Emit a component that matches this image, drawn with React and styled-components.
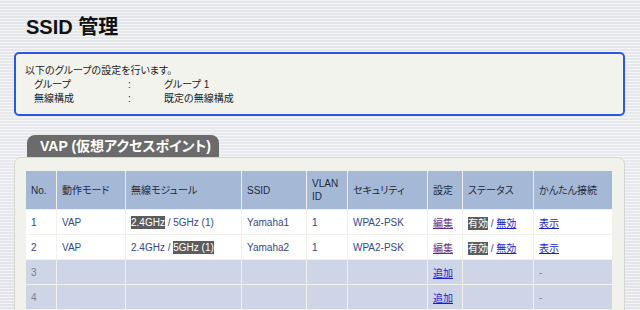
import React from "react";
import styled, { createGlobalStyle } from "styled-components";

const Global = createGlobalStyle`
  html, body { margin: 0; padding: 0; }
  body {
    width: 640px;
    height: 310px;
    overflow: hidden;
    font-family: "Liberation Sans", "Noto Sans CJK JP", sans-serif;
    font-feature-settings: "palt";
    background:
      repeating-linear-gradient(to bottom, rgba(255,255,255,0.6) 0 1px, rgba(255,255,255,0) 1px 3px),
      linear-gradient(to bottom, #e3e5e9, #e8e9ec 50%, #e1e3e7);
    color: #222;
  }
`;

const Page = styled.div`
  padding: 14px 15px 0 14px;
`;

const Title = styled.h1`
  margin: 0 0 0 12px;
  font-size: 20px;
  line-height: 26px;
  font-weight: bold;
  color: #111;
`;

const InfoBox = styled.div`
  margin-top: 12px;
  border: 2px solid #2d56e2;
  border-radius: 5px;
  background: #f3f3ee;
  padding: 10px 9px 0;
  box-sizing: border-box;
  height: 64px;
  font-size: 10px;
  line-height: 14px;
  color: #222;
`;

const InfoRow = styled.div`
  display: grid;
  grid-template-columns: 94px 36px 1fr;
  padding-left: 9px;
`;

const Tab = styled.div`
  margin: 19px 0 0 13px;
  width: 192px;
  height: 22px;
  box-sizing: border-box;
  padding-left: 13px;
  background: #6b6b6b;
  border-radius: 8px 8px 0 0;
  color: #fff;
  font-weight: bold;
  font-size: 14px;
  line-height: 23px;
`;

const Panel = styled.div`
  background: #f2f2ec;
  border: 1px solid #d6d6cf;
  border-radius: 7px 7px 0 0;
  padding: 12px 10px 0;
  height: 200px;
`;

const Table = styled.table`
  border-collapse: separate;
  border-spacing: 1px;
  table-layout: fixed;
  width: 586px;
  font-size: 10px;
`;

const Th = styled.th`
  background: #a5b9d7;
  height: 38px;
  padding: 0 5px;
  text-align: left;
  font-weight: normal;
  color: #1c2a40;
  line-height: 13px;
  box-sizing: border-box;
`;

const Td = styled.td`
  background: ${(p) => (p.$empty ? "#cdd5e7" : "#fff")};
  height: 24px;
  padding: 0 5px;
  color: ${(p) => (p.$empty ? "#7a7f8c" : "#33498a")};
  box-sizing: border-box;
  white-space: nowrap;
`;

const Hl = styled.span`
  background: #5c5c5c;
  color: #fff;
  padding: 1px 0;
`;

const Link = styled.a`
  color: ${(p) => (p.$visited ? "#6b2f88" : "#1a1ad8")};
  text-decoration: underline;
  cursor: pointer;
`;

const Sep = styled.span`
  color: #33498a;
`;

const widths = [30, 68, 115, 64, 40, 79, 34, 70, 78];

const rows = [
  { no: 1, mode: "VAP", hl: 0, ssid: "Yamaha1" },
  { no: 2, mode: "VAP", hl: 1, ssid: "Yamaha2" },
];

export default function App() {
  return (
    <>
      <Global />
      <Page>
        <Title>SSID 管理</Title>
        <InfoBox>
          <div>以下のグループの設定を行います。</div>
          <InfoRow>
            <span>グループ</span>
            <span>:</span>
            <span>グループ 1</span>
          </InfoRow>
          <InfoRow>
            <span>無線構成</span>
            <span>:</span>
            <span>既定の無線構成</span>
          </InfoRow>
        </InfoBox>
        <Tab>VAP (仮想アクセスポイント)</Tab>
        <Panel>
          <Table>
            <colgroup>
              {widths.map((w, i) => (
                <col key={i} style={{ width: w }} />
              ))}
            </colgroup>
            <thead>
              <tr>
                <Th>No.</Th>
                <Th>動作モード</Th>
                <Th>無線モジュール</Th>
                <Th>SSID</Th>
                <Th>VLAN<br />ID</Th>
                <Th>セキュリティ</Th>
                <Th>設定</Th>
                <Th>ステータス</Th>
                <Th>かんたん接続</Th>
              </tr>
            </thead>
            <tbody>
              {rows.map((r) => (
                <tr key={r.no}>
                  <Td>{r.no}</Td>
                  <Td>{r.mode}</Td>
                  <Td>
                    {r.hl === 0 ? <Hl>2.4GHz</Hl> : "2.4GHz"} /{" "}
                    {r.hl === 1 ? <Hl>5GHz (1)</Hl> : "5GHz (1)"}
                  </Td>
                  <Td>{r.ssid}</Td>
                  <Td>1</Td>
                  <Td>WPA2-PSK</Td>
                  <Td><Link $visited>編集</Link></Td>
                  <Td>
                    <Hl>有効</Hl> <Sep>/</Sep> <Link>無効</Link>
                  </Td>
                  <Td><Link>表示</Link></Td>
                </tr>
              ))}
              {[3, 4].map((n) => (
                <tr key={n}>
                  <Td $empty>{n}</Td>
                  <Td $empty />
                  <Td $empty />
                  <Td $empty />
                  <Td $empty />
                  <Td $empty />
                  <Td $empty><Link>追加</Link></Td>
                  <Td $empty />
                  <Td $empty>-</Td>
                </tr>
              ))}
            </tbody>
          </Table>
        </Panel>
      </Page>
    </>
  );
}
